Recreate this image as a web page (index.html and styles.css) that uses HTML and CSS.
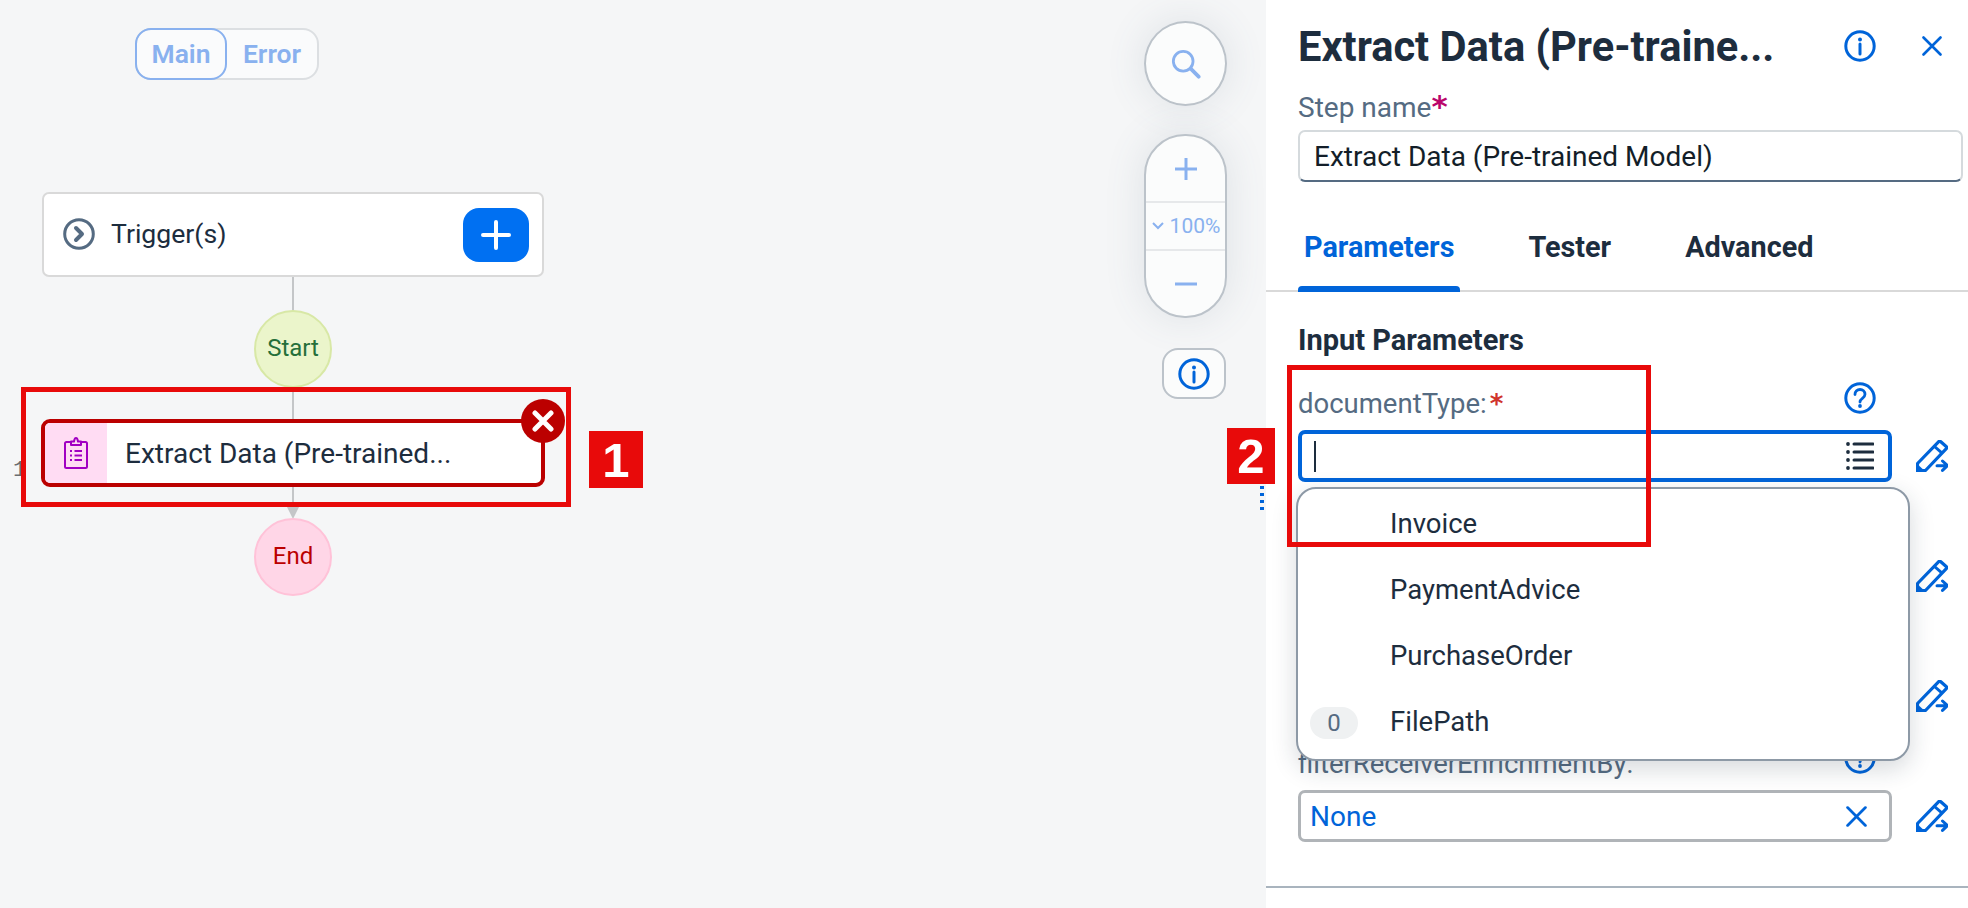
FILE: index.html
```html
<!DOCTYPE html>
<html lang="en">

<head>
    <meta charset="UTF-8">
    <title>Extract Data</title>
    <link rel="stylesheet" href="styles.css">
</head>

<body>
    <svg class="defs" width="0" height="0">
        <symbol id="ico-info" viewBox="0 0 32 32">
            <circle cx="16" cy="16" r="14.2" fill="none" stroke="currentColor" stroke-width="3" />
            <circle cx="16" cy="9.5" r="2" fill="currentColor" />
            <path d="M16 14v10" stroke="currentColor" stroke-width="3" stroke-linecap="round" />
        </symbol>
        <symbol id="ico-help" viewBox="0 0 32 32">
            <circle cx="16" cy="16" r="14.2" fill="none" stroke="currentColor" stroke-width="3" />
            <path d="M11 12.5c0-3 2.300-5 5-5s5 2 5 4.800c0 4-5 4-5 7.700" fill="none" stroke="currentColor" stroke-width="2.800" stroke-linecap="round" />
            <circle cx="16" cy="24" r="1.900" fill="currentColor" />
        </symbol>
        <symbol id="ico-close" viewBox="0 0 20 20">
            <path d="M1.500 1.500l17 17M18.500 1.500l-17 17" stroke="currentColor" stroke-width="2.600" stroke-linecap="round" />
        </symbol>
        <symbol id="ico-pencil" viewBox="0 0 32 32">
            <path d="M1.500 23.500L22.500 1.800q1.200-1 2.300 0l5.400 4.700q1.100 1 .1 2.200L9.500 30.500H1.500z" fill="none" stroke="currentColor" stroke-width="3.200" stroke-linejoin="round" />
            <path d="M0 23l9.500 8.500V32H0z" fill="currentColor" />
            <path d="M18.500 6.500l7 6.200" fill="none" stroke="currentColor" stroke-width="3" />
            <path d="M21 25.700h10M26.500 21l5 4.700-5 4.700" fill="none" stroke="currentColor" stroke-width="3" stroke-linecap="round" stroke-linejoin="round" />
        </symbol>
    </svg>

    <div class="page">
        <div class="canvas">
            <div class="switch">
                <span class="switch-item switch-on">Main</span>
                <span class="switch-item">Error</span>
            </div>

            <div class="edge edge-top"></div>
            <div class="edge edge-mid"></div>
            <div class="edge edge-end"></div>
            <div class="arrow"></div>

            <div class="trigger">
                <svg class="trigger-ico" viewBox="0 0 32 32">
                    <circle cx="16" cy="16" r="14.300" fill="none" stroke="#556b82" stroke-width="3" />
                    <path d="M13 10l6 6-6 6" fill="none" stroke="#556b82" stroke-width="4" stroke-linecap="round" stroke-linejoin="round" />
                </svg>
                <span class="trigger-text">Trigger(s)</span>
                <button class="add-btn">
                    <svg width="30" height="30" viewBox="0 0 30 30">
                        <path d="M15 2v26M2 15h26" stroke="#fff" stroke-width="4" stroke-linecap="round" />
                    </svg>
                </button>
            </div>

            <div class="circle circle-start">Start</div>

            <div class="step">
                <div class="step-ico">
                    <svg width="24" height="32" viewBox="0 0 24 32">
                        <path d="M7 5H2.500Q1 5 1 6.500v23Q1 31 2.500 31h19q1.500 0 1.500-1.500v-23Q23 5 21.500 5H17" fill="none" stroke="#a100c2" stroke-width="2" />
                        <path d="M7 8V4.500h3Q10.500 1 12 1t2 3.500h3V8z" fill="none" stroke="#a100c2" stroke-width="2" stroke-linejoin="round" />
                        <path d="M6 14h2M6 18.500h2M6 23h2M10.500 14H18M10.500 18.500H18M10.500 23H18" stroke="#a100c2" stroke-width="2" />
                    </svg>
                </div>
                <span class="step-text">Extract Data (Pre-trained...</span>
            </div>
            <div class="step-error">
                <svg width="22" height="22" viewBox="0 0 22 22">
                    <path d="M3 3l16 16M19 3L3 19" stroke="#fff" stroke-width="5" stroke-linecap="round" />
                </svg>
            </div>
            <div class="line-no">1</div>

            <div class="circle circle-end">End</div>

            <button class="tool tool-search">
                <svg width="30" height="30" viewBox="0 0 32 32">
                    <circle cx="13" cy="13" r="10.500" fill="none" stroke="#89b1ef" stroke-width="3" />
                    <path d="M21 21l8.500 8.500" stroke="#89b1ef" stroke-width="4" stroke-linecap="round" />
                </svg>
            </button>
            <div class="tool tool-zoom">
                <div class="zoom-row zoom-btn">
                    <svg width="24" height="24" viewBox="0 0 24 24">
                        <path d="M12 1v22M1 12h22" stroke="#89b1ef" stroke-width="3" />
                    </svg>
                </div>
                <div class="zoom-row zoom-val">
                    <svg width="14" height="10" viewBox="0 0 14 10">
                        <path d="M2 2l5 5 5-5" fill="none" stroke="#89b1ef" stroke-width="2" />
                    </svg>
                    <span>100%</span>
                </div>
                <div class="zoom-row zoom-btn">
                    <svg width="24" height="24" viewBox="0 0 24 24">
                        <path d="M1 12h22" stroke="#89b1ef" stroke-width="3" />
                    </svg>
                </div>
            </div>
            <button class="tool tool-info">
                <svg class="ico" width="32" height="32"><use href="#ico-info" /></svg>
            </button>
        </div>

        <div class="panel">
            <div class="panel-head">
                <h1 class="panel-title">Extract Data (Pre-traine...</h1>
                <svg class="ico head-info" width="32" height="32"><use href="#ico-info" /></svg>
                <svg class="ico head-close" width="20" height="20"><use href="#ico-close" /></svg>
            </div>

            <div class="stepname">
                <label class="stepname-label">Step name<span class="req req-pink">*</span></label>
                <div class="stepname-input">Extract Data (Pre-trained Model)</div>
            </div>

            <div class="tabs">
                <span class="tab tab-on">Parameters</span>
                <span class="tab">Tester</span>
                <span class="tab">Advanced</span>
            </div>

            <h2 class="section">Input Parameters</h2>

            <div class="field">
                <div class="field-label">
                    <span>documentType:<span class="req req-red">*</span></span>
                    <svg class="ico field-help" width="32" height="32"><use href="#ico-help" /></svg>
                </div>
                <div class="field-input field-focus">
                    <span class="caret"></span>
                    <svg class="list-ico" width="28" height="28" viewBox="0 0 28 28">
                        <path d="M8 2h19M8 10h19M8 18h19M8 26h19" stroke="#1d2d3e" stroke-width="3" stroke-linecap="round" />
                        <circle cx="2" cy="2" r="1.900" fill="#1d2d3e" />
                        <circle cx="2" cy="10" r="1.900" fill="#1d2d3e" />
                        <circle cx="2" cy="18" r="1.900" fill="#1d2d3e" />
                        <circle cx="2" cy="26" r="1.900" fill="#1d2d3e" />
                    </svg>
                </div>
                <svg class="ico pencil" width="32" height="32"><use href="#ico-pencil" /></svg>
            </div>

            <div class="field">
                <div class="field-label"></div>
                <div class="field-input"></div>
                <svg class="ico pencil" width="32" height="32"><use href="#ico-pencil" /></svg>
            </div>

            <div class="field">
                <div class="field-label"></div>
                <div class="field-input"></div>
                <svg class="ico pencil" width="32" height="32"><use href="#ico-pencil" /></svg>
            </div>

            <div class="field">
                <div class="field-label">
                    <span>filterReceiverEnrichmentBy:</span>
                    <svg class="ico field-help" width="32" height="32"><use href="#ico-help" /></svg>
                </div>
                <div class="field-input">
                    <span class="none-text">None</span>
                    <svg class="ico" width="21" height="21"><use href="#ico-close" /></svg>
                </div>
                <svg class="ico pencil" width="32" height="32"><use href="#ico-pencil" /></svg>
            </div>

            <div class="panel-foot"></div>

            <ul class="dropdown">
                <li class="dd-item"><span class="dd-count"></span>Invoice</li>
                <li class="dd-item"><span class="dd-count"></span>PaymentAdvice</li>
                <li class="dd-item"><span class="dd-count"></span>PurchaseOrder</li>
                <li class="dd-item"><span class="dd-count"><span class="dd-badge">0</span></span>FilePath</li>
            </ul>
        </div>

        <div class="mark mark-one"></div>
        <div class="mark-no mark-no-one">1</div>
        <div class="mark mark-two"></div>
        <div class="mark-no mark-no-two">2</div>
        <div class="sash"></div>
    </div>
</body>

</html>
```

FILE: styles.css
```css
* {
    box-sizing: border-box;
}

body {
    margin: 0;
    font-family: Roboto, "Noto Sans", sans-serif;
    color: #1d2d3e;
    background-color: #f5f6f7;
}

.defs {
    position: absolute;
}

.ico {
    color: #0064d9;
    flex: none;
}

.page {
    position: relative;
    display: flex;
    width: 1968px;
    height: 908px;
    overflow: hidden;
}

/* diagram side */
.canvas {
    position: relative;
    width: 1266px;
    height: 908px;
    background-color: #f5f6f7;
}

.switch {
    position: absolute;
    left: 135px;
    top: 28px;
    display: flex;
    width: 184px;
    height: 52px;
    background-color: #fafbfc;
    border: 2px solid #dcdfe2;
    border-radius: 16px;
}

.switch-item {
    display: flex;
    align-items: center;
    justify-content: center;
    width: 90px;
    margin: -2px 0;
    padding-bottom: 2px;
    font-size: 26.500px;
    font-weight: 600;
    color: #89b1ef;
    border-radius: 16px;
}

.switch-on {
    width: 92px;
    margin-left: -2px;
    border: 2px solid #89b1ef;
}

.edge {
    position: absolute;
    left: 292px;
    width: 2px;
    background-color: #c4c6c8;
}

.edge-top {
    top: 277px;
    height: 34px;
}

.edge-mid {
    top: 387px;
    height: 34px;
}

.edge-end {
    top: 486px;
    height: 22px;
}

.arrow {
    position: absolute;
    left: 287px;
    top: 507px;
    border-left: 6px solid transparent;
    border-right: 6px solid transparent;
    border-top: 12px solid #c4c6c8;
}

.trigger {
    position: absolute;
    left: 42px;
    top: 192px;
    display: flex;
    align-items: center;
    width: 502px;
    height: 85px;
    padding: 0 13px 0 19px;
    background-color: #fff;
    border: 2px solid #d9d9d9;
    border-radius: 7px;
}

.trigger-ico {
    width: 32px;
    height: 32px;
    margin: -2px 16px 0 0;
}

.trigger-text {
    flex: 1;
    margin-top: -3px;
    font-size: 26.600px;
}

.add-btn {
    display: flex;
    align-items: center;
    justify-content: center;
    width: 66px;
    height: 54px;
    padding: 0;
    background-color: #0070f2;
    border: none;
    border-radius: 16px;
}

.circle {
    position: absolute;
    left: 254px;
    display: flex;
    align-items: center;
    justify-content: center;
    width: 78px;
    height: 78px;
    padding-bottom: 2px;
    font-size: 24px;
    border-radius: 50%;
}

.circle-start {
    top: 310px;
    color: #256f3a;
    background-color: #ebf5cb;
    border: 2px solid #d8e8a6;
}

.circle-end {
    top: 518px;
    color: #bb0000;
    background-color: #ffd6e7;
    border: 2px solid #ffc2d8;
}

.step {
    position: absolute;
    left: 41px;
    top: 419px;
    display: flex;
    align-items: center;
    width: 504px;
    height: 68px;
    overflow: hidden;
    background-color: #fff;
    border: 4px solid #bb0000;
    border-radius: 9px;
}

.step-ico {
    display: flex;
    align-items: center;
    justify-content: center;
    width: 62px;
    height: 100%;
    background-color: #ffdcf3;
}

.step-text {
    margin-left: 18px;
    font-size: 28px;
}

.step-error {
    position: absolute;
    left: 521px;
    top: 399px;
    display: flex;
    align-items: center;
    justify-content: center;
    width: 44px;
    height: 44px;
    background-color: #bb0000;
    border-radius: 50%;
}

.line-no {
    position: absolute;
    left: 13px;
    top: 458px;
    font-family: "Liberation Mono", monospace;
    font-size: 22px;
    color: #6a6d70;
}

.tool {
    position: absolute;
    background-color: #fbfcfc;
    border: 2px solid #bcc3ca;
    box-shadow: 0 0 40px rgba(85, 107, 130, 0.14);
}

.tool-search {
    left: 1144px;
    top: 21px;
    display: flex;
    align-items: center;
    justify-content: center;
    width: 83px;
    height: 85px;
    padding: 0;
    border-radius: 50%;
}

.tool-zoom {
    left: 1144px;
    top: 134px;
    display: flex;
    flex-direction: column;
    width: 83px;
    height: 184px;
    border-radius: 41px;
}

.zoom-row {
    display: flex;
    align-items: center;
    justify-content: center;
}

.zoom-btn {
    flex: 1;
}

.zoom-val {
    gap: 5px;
    height: 50px;
    font-size: 21px;
    color: #89b1ef;
    border-top: 2px solid #e6e8ea;
    border-bottom: 2px solid #e6e8ea;
}

.tool-info {
    left: 1162px;
    top: 348px;
    display: flex;
    align-items: center;
    justify-content: center;
    width: 64px;
    height: 51px;
    padding: 0;
    border-radius: 16px;
    box-shadow: none;
}

/* properties side */
.panel {
    position: relative;
    width: 702px;
    height: 908px;
    padding-left: 32px;
    background-color: #fff;
}

.panel-head {
    display: flex;
    align-items: center;
    height: 92px;
}

.panel-title {
    width: 546px;
    margin: 0;
    font-size: 41.600px;
    font-weight: 700;
}

.head-close {
    margin-left: 46px;
}

.stepname-label {
    display: block;
    height: 38px;
    font-size: 28px;
    line-height: 32px;
    color: #556b82;
}

.req {
    font-family: "DejaVu Sans", sans-serif;
    line-height: 20px;
    font-weight: 700;
}

.req-pink {
    font-size: 31px;
    color: #ba066c;
}

.req-red {
    margin-left: 3px;
    font-size: 26px;
    color: #d0342c;
}

.stepname-input {
    display: flex;
    align-items: center;
    width: 665px;
    height: 52px;
    padding-left: 14px;
    font-size: 28px;
    color: #131e29;
    border: 2px solid #d5dadd;
    border-bottom-color: #556b82;
    border-radius: 7px;
}

.tabs {
    display: flex;
    height: 110px;
    margin-left: -32px;
    padding-left: 32px;
    border-bottom: 2px solid #d9d9d9;
}

.tab {
    position: relative;
    display: flex;
    align-items: center;
    height: 108px;
    padding: 22px 6px 0;
    margin-right: 62px;
    font-size: 28.800px;
    font-weight: 700;
}

.tab-on {
    color: #0064d9;
}

.tab-on::after {
    content: "";
    position: absolute;
    left: 0;
    right: 0;
    bottom: -2px;
    height: 6px;
    background-color: #0064d9;
    border-radius: 4px 4px 0 0;
}

.section {
    height: 86px;
    margin: 0;
    padding-top: 30px;
    font-size: 29px;
    line-height: 36px;
    font-weight: 700;
}

.field {
    display: grid;
    grid-template-columns: 594px 32px;
    grid-template-rows: 52px 52px;
    column-gap: 24px;
    margin-bottom: 16px;
}

.field-label {
    display: flex;
    align-items: center;
    justify-content: space-between;
    grid-column: 1;
    padding: 0 16px 2px 0;
    font-size: 27.500px;
    color: #556b82;
}

.field-help {
    align-self: flex-start;
    margin-top: 4px;
}

.field-input {
    display: flex;
    align-items: center;
    justify-content: space-between;
    grid-column: 1;
    padding: 0 22px 0 9px;
    border: 3px solid #b0b4b8;
    border-radius: 7px;
}

.field-focus {
    padding: 0 14px 0 12px;
    border: 4px solid #0064d9;
}

.caret {
    width: 2px;
    height: 31px;
    background-color: #1d2d3e;
}

.none-text {
    font-size: 28px;
    color: #0064d9;
}

.pencil {
    grid-column: 2;
    grid-row: 2;
    align-self: center;
}

.panel-foot {
    position: absolute;
    left: 0;
    right: 0;
    top: 886px;
    height: 2px;
    background-color: #a9b4be;
}

.dropdown {
    position: absolute;
    left: 30px;
    top: 487px;
    width: 614px;
    height: 274px;
    margin: 0;
    padding: 1px 0 0;
    list-style: none;
    background-color: #fff;
    border: 2px solid #8d99a6;
    border-radius: 20px;
    box-shadow: 0 8px 24px rgba(29, 45, 62, 0.18);
}

.dd-item {
    display: flex;
    align-items: center;
    height: 66px;
    font-size: 27.500px;
}

.dd-count {
    display: flex;
    width: 92px;
    padding-left: 12px;
}

.dd-badge {
    width: 48px;
    height: 32px;
    margin-top: 3px;
    font-size: 24px;
    line-height: 32px;
    text-align: center;
    color: #556b82;
    background-color: #eff1f2;
    border-radius: 16px;
}

/* numbered callouts */
.mark {
    position: absolute;
    border: 5px solid #e80a0a;
}

.mark-one {
    left: 21px;
    top: 387px;
    width: 550px;
    height: 120px;
}

.mark-two {
    left: 1287px;
    top: 365px;
    width: 364px;
    height: 182px;
}

.mark-no {
    position: absolute;
    display: flex;
    align-items: center;
    justify-content: center;
    font-family: "Liberation Sans", sans-serif;
    font-size: 49px;
    font-weight: 700;
    color: #fff;
    background-color: #e80a0a;
}

.mark-no-one {
    left: 589px;
    top: 431px;
    width: 54px;
    height: 57px;
}

.mark-no-two {
    left: 1227px;
    top: 428px;
    width: 48px;
    height: 56px;
}

.sash {
    position: absolute;
    left: 1260px;
    top: 486px;
    width: 4px;
    height: 28px;
    background-image: linear-gradient(#0064d9 50%, transparent 50%);
    background-size: 4px 7px;
}
```
